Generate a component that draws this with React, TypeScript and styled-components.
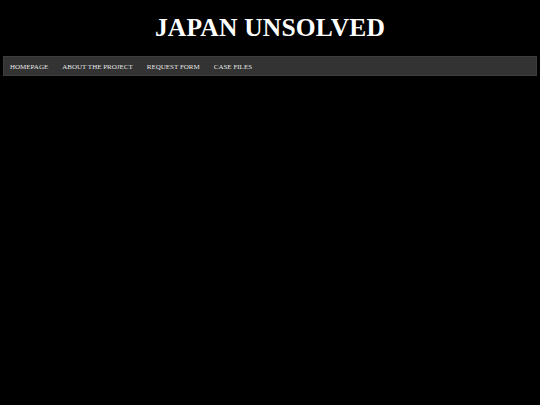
import React from 'react';
import styled, { createGlobalStyle } from 'styled-components';

const GlobalStyle = createGlobalStyle`
  html, body {
    margin: 0;
    padding: 0;
    background: #000;
    font-family: "Liberation Serif", "Times New Roman", serif;
  }
`;

const Page = styled.div`
  min-height: 405px;
  background: #000;
  padding: 0 3px;
`;

const Header = styled.header`
  height: 56px;
  display: flex;
  align-items: center;
  justify-content: center;
`;

const Title = styled.h1`
  margin: 0;
  color: #fff;
  font-size: 25.5px;
  font-weight: bold;
  letter-spacing: 0.2px;
`;

const NavBar = styled.nav`
  display: flex;
  align-items: center;
  gap: 14px;
  height: 20px;
  box-sizing: border-box;
  padding: 1px 0 0 6px;
  background: #333;
  border: 1px solid #3c3c3c;
`;

const NavLink = styled.a`
  color: #e6e6e6;
  font-size: 7px;
  text-decoration: none;
  cursor: pointer;
`;

const links = ['HOMEPAGE', 'ABOUT THE PROJECT', 'REQUEST FORM', 'CASE FILES'];

const App: React.FC = () => {
  return (
    <>
      <GlobalStyle />
      <Page>
        <Header>
          <Title>JAPAN UNSOLVED</Title>
        </Header>
        <NavBar>
          {links.map(l => (
            <NavLink key={l}>{l}</NavLink>
          ))}
        </NavBar>
      </Page>
    </>
  );
};

export default App;
